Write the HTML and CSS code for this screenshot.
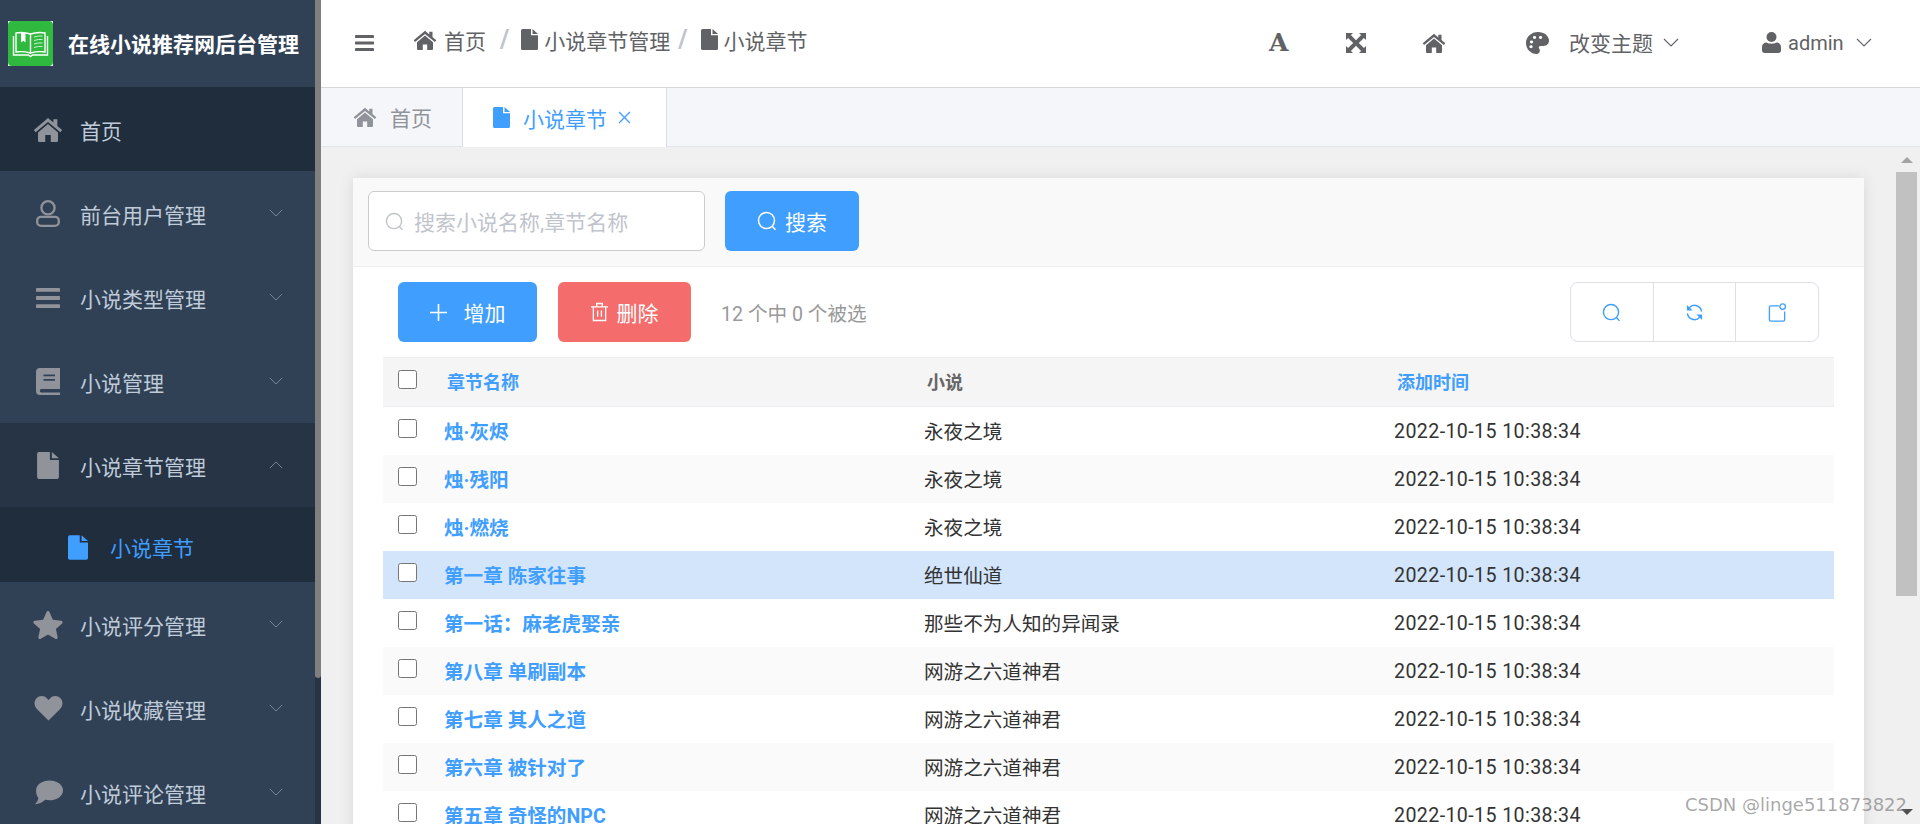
FILE: index.html
```html
<!DOCTYPE html>
<html lang="en">
<head>
    <meta charset="UTF-8">
    <meta name="viewport" content="width=device-width, initial-scale=1.0">
    <title>小说章节</title>
    <link rel="stylesheet" href="styles.css">
</head>
<body>
    <svg class="icon-defs" width="0" height="0">
        <symbol id="i-home" viewBox="0 0 24 20"><path d="M12 .8.7 10.3l1.4 1.8L12 3.9l9.9 8.2 1.4-1.8L19.500 7.100V1.800h-3.200v2.600z"/><path d="M12 5.600 4 12.300V19a1 1 0 0 0 1 1h4.800v-5.600h4.400V20H19a1 1 0 0 0 1-1v-6.700z"/></symbol>
        <symbol id="i-file" viewBox="0 0 17 21"><path d="M1.500 0H10v6.200h7v13.300a1.500 1.500 0 0 1-1.500 1.500h-14A1.500 1.500 0 0 1 0 19.500v-18A1.500 1.500 0 0 1 1.500 0zM11.500 0 17 4.900h-5.500z"/></symbol>
        <symbol id="i-bars" viewBox="0 0 24 20"><rect y="0" width="24" height="3.800" rx=".6"/><rect y="8.100" width="24" height="3.800" rx=".6"/><rect y="16.200" width="24" height="3.800" rx=".6"/></symbol>
        <symbol id="i-user-o" viewBox="0 0 24 27"><circle cx="12" cy="7.800" r="6.600" fill="none" stroke="currentColor" stroke-width="2.300"/><rect x="1.200" y="16.800" width="21.600" height="9" rx="3.800" fill="none" stroke="currentColor" stroke-width="2.300"/></symbol>
        <symbol id="i-book" viewBox="0 0 24 27"><path fill-rule="evenodd" d="M4 0H24V21H5a1.800 1.800 0 0 0 0 3.400H24V27H4a4 4 0 0 1-4-4V4a4 4 0 0 1 4-4zM7.500 6.500v1.800h11.500V6.500zM7.500 11v1.800h11.500V11z"/></symbol>
        <symbol id="i-star" viewBox="0 0 28 27"><path d="M14 0c.7 0 1.200.5 1.500 1.200l3.200 7.300 8 .8c1.400.2 1.900 1.800.9 2.700l-6 5.300 1.700 7.800c.3 1.400-1.200 2.400-2.400 1.700L14 22.700 7.100 26.800c-1.200.7-2.700-.3-2.400-1.700l1.700-7.800-6-5.300c-1-.9-.5-2.500.9-2.700l8-.8 3.200-7.300C12.800.5 13.300 0 14 0z"/></symbol>
        <symbol id="i-heart" viewBox="0 0 28 25"><path d="M14 24.500 2.600 13.300C-.8 10-.8 5.100 2.100 2.200 5-.7 9.700-.5 12.500 2.400L14 4l1.500-1.600c2.800-2.900 7.500-3.100 10.400-.2 2.900 2.900 2.900 7.800-.5 11.100z"/></symbol>
        <symbol id="i-comment" viewBox="0 0 28 23"><path d="M15 0c7.200 0 13 4.200 13 9.500S22.200 19 15 19c-1.500 0-2.900-.2-4.200-.5C8.800 20.600 5.200 22.700.8 22.900c1.800-1.400 3-3.600 3.400-6.100C2.800 15 2 12.400 2 9.500 2 4.200 7.800 0 15 0z"/></symbol>
        <symbol id="i-chev" viewBox="0 0 16 9"><path d="M1 1l7 7 7-7" fill="none" stroke="currentColor" stroke-width="1.100"/></symbol>
        <symbol id="i-search" viewBox="0 0 20 20"><circle cx="9.500" cy="9.500" r="8" fill="none" stroke="currentColor" stroke-width="1.500"/><path d="M15.200 15.200l3.300 3.600" fill="none" stroke="currentColor" stroke-width="1.500"/></symbol>
        <symbol id="i-refresh" viewBox="0 0 20 20"><path d="M17.500 9a7.500 7.500 0 0 0-13-4M2.500 11a7.500 7.500 0 0 0 13 4" fill="none" stroke="currentColor" stroke-width="1.500"/><path d="M2 2v6h6zM18 18v-6h-6z"/></symbol>
        <symbol id="i-notice" viewBox="0 0 20 20"><path d="M11.500 3H3a1.500 1.500 0 0 0-1.500 1.500v13A1.500 1.500 0 0 0 3 19h13a1.500 1.500 0 0 0 1.500-1.500V9" fill="none" stroke="currentColor" stroke-width="1.400"/><circle cx="15.500" cy="3.800" r="2.900" fill="none" stroke="currentColor" stroke-width="1.400"/></symbol>
        <symbol id="i-expand" viewBox="0 0 20 20"><path d="M0 0h7L4.900 2.100 10 7.200l5.100-5.100L13 0h7v7l-2.100-2.100L12.800 10l5.100 5.100L20 13v7h-7l2.100-2.100L10 12.800l-5.100 5.100L7 20H0v-7l2.100 2.100L7.200 10 2.100 4.900 0 7z"/></symbol>
        <symbol id="i-palette" viewBox="0 0 23 25" preserveAspectRatio="none"><path fill-rule="evenodd" d="M12 0c6.500 0 11 4.500 11 10 0 3.500-2.300 5.800-5.500 5.800h-3c-1.500 0-2.200 1.200-1.600 2.300.5.900 1 1.700 1 2.700 0 2.500-1.400 4.200-3.300 4.200C4.800 25 0 19.400 0 12.500S5.300 0 12 0zM5.500 9.600a1.700 1.700 0 1 0 0 3.400 1.700 1.700 0 0 0 0-3.400zM8.500 4.600a1.700 1.700 0 1 0 0 3.400 1.700 1.700 0 0 0 0-3.400zM14.500 4.600a1.700 1.700 0 1 0 0 3.400 1.700 1.700 0 0 0 0-3.400zM5 15a1.700 1.700 0 1 0 0 3.400A1.700 1.700 0 0 0 5 15z"/></symbol>
        <symbol id="i-user" viewBox="0 0 19 21"><circle cx="9.500" cy="5" r="5"/><path d="M0 18.500v-3.500c0-2.800 2.200-4.500 4.500-4.500 1.300.8 3 1.200 5 1.200s3.700-.4 5-1.200c2.300 0 4.500 1.700 4.500 4.500v3.500c0 1.400-1.100 2.500-2.500 2.500h-14C1.100 21 0 19.900 0 18.500z"/></symbol>
        <symbol id="i-trash" viewBox="0 0 18 20"><path d="M0 4.500h18M6 4.500V1h6v3.500M2.500 4.500V19h13V4.500M7 8.500v6.500M11 8.500v6.500" fill="none" stroke="currentColor" stroke-width="1.400"/></symbol>
        <symbol id="i-plus" viewBox="0 0 16 16"><path d="M8 0v16M0 8h16" fill="none" stroke="currentColor" stroke-width="1.500"/></symbol>
        <symbol id="i-close" viewBox="0 0 12 12"><path d="M1 1l10 10M11 1 1 11" fill="none" stroke="currentColor" stroke-width="1.200"/></symbol>
    </svg>

    <aside class="sidebar">
        <div class="sidebar-inner">
            <div class="brand">
                <svg class="brand-logo" viewBox="0 0 45 45">
                    <rect width="45" height="45" fill="#fff"/>
                    <rect width="45" height="45" rx="4" fill="#2fba3f"/>
                    <path d="M8 12q7-1.500 14.500 1v19Q15 30 8 31zM37 12q-7-1.500-14.500 1v19q7.500-2 14.500-1z" fill="none" stroke="#fff" stroke-width="1.400"/>
                    <path d="M5.500 15v19h15l2 1.500 2-1.500h15V15" fill="none" stroke="#fff" stroke-width="1.400"/>
                    <path d="M13 11.500h4.500v10l-2.200-1.800-2.300 1.800z" fill="#fff"/>
                    <path d="M26 16q4.500-1.500 8.500-1M26 19.500q4.500-1.500 8.500-1M26 23q4.500-1.500 8.500-1M26 26.500q4.500-1.500 8.500-1" fill="none" stroke="#c9efcd" stroke-width="1"/>
                </svg>
                <span class="brand-title">在线小说推荐网后台管理</span>
            </div>
            <nav class="menu">
                <div class="menu-item is-current"><svg class="menu-icon i-h"><use href="#i-home"/></svg><span>首页</span></div>
                <div class="menu-item"><svg class="menu-icon"><use href="#i-user-o"/></svg><span>前台用户管理</span><svg class="menu-arrow"><use href="#i-chev"/></svg></div>
                <div class="menu-item"><svg class="menu-icon i-b"><use href="#i-bars"/></svg><span>小说类型管理</span><svg class="menu-arrow"><use href="#i-chev"/></svg></div>
                <div class="menu-item"><svg class="menu-icon"><use href="#i-book"/></svg><span>小说管理</span><svg class="menu-arrow"><use href="#i-chev"/></svg></div>
                <div class="menu-item is-open"><svg class="menu-icon i-f"><use href="#i-file"/></svg><span>小说章节管理</span><svg class="menu-arrow is-up"><use href="#i-chev"/></svg></div>
                <div class="menu-sub"><svg class="sub-icon"><use href="#i-file"/></svg><span>小说章节</span></div>
                <div class="menu-item"><svg class="menu-icon i-s"><use href="#i-star"/></svg><span>小说评分管理</span><svg class="menu-arrow"><use href="#i-chev"/></svg></div>
                <div class="menu-item"><svg class="menu-icon i-hh"><use href="#i-heart"/></svg><span>小说收藏管理</span><svg class="menu-arrow"><use href="#i-chev"/></svg></div>
                <div class="menu-item"><svg class="menu-icon i-hh"><use href="#i-comment"/></svg><span>小说评论管理</span><svg class="menu-arrow"><use href="#i-chev"/></svg></div>
            </nav>
        </div>
        <div class="sidebar-scroll"><div class="sidebar-thumb"></div></div>
    </aside>

    <div class="main">
        <header class="topbar">
            <svg class="burger"><use href="#i-bars"/></svg>
            <div class="crumbs">
                <svg class="crumb-home"><use href="#i-home"/></svg><span class="crumb-first">首页</span>
                <span class="crumb-sep">/</span>
                <svg class="crumb-file"><use href="#i-file"/></svg><span>小说章节管理</span>
                <span class="crumb-sep crumb-sep-2">/</span>
                <svg class="crumb-file"><use href="#i-file"/></svg><span>小说章节</span>
            </div>
            <div class="top-tools">
                <span class="tool-font">A</span>
                <svg class="tool-expand"><use href="#i-expand"/></svg>
                <svg class="tool-home"><use href="#i-home"/></svg>
                <svg class="tool-palette"><use href="#i-palette"/></svg>
                <span class="tool-theme">改变主题</span>
                <svg class="tool-chev"><use href="#i-chev"/></svg>
                <svg class="tool-user"><use href="#i-user"/></svg>
                <span class="tool-name">admin</span>
                <svg class="tool-chev"><use href="#i-chev"/></svg>
            </div>
        </header>

        <div class="tabs">
            <div class="tab"><svg class="tab-home"><use href="#i-home"/></svg><span>首页</span></div>
            <div class="tab is-active"><svg class="tab-file"><use href="#i-file"/></svg><span>小说章节</span><svg class="tab-close"><use href="#i-close"/></svg></div>
        </div>

        <div class="content">
            <div class="content-scroll">
                <div class="card">
                    <div class="search-bar">
                        <div class="search-input"><svg class="search-icon"><use href="#i-search"/></svg><span>搜索小说名称,章节名称</span></div>
                        <div class="btn btn-primary btn-search"><svg class="btn-icon"><use href="#i-search"/></svg><span>搜索</span></div>
                    </div>
                    <div class="card-body">
                        <div class="toolbar">
                            <div class="btn btn-primary btn-add"><svg class="btn-icon-plus"><use href="#i-plus"/></svg><span>增加</span></div>
                            <div class="btn btn-danger btn-del"><svg class="btn-icon-trash"><use href="#i-trash"/></svg><span>删除</span></div>
                            <span class="selected-info">12 个中 0 个被选</span>
                            <div class="tool-group">
                                <div class="tool-cell"><svg><use href="#i-search"/></svg></div>
                                <div class="tool-cell"><svg><use href="#i-refresh"/></svg></div>
                                <div class="tool-cell"><svg><use href="#i-notice"/></svg></div>
                            </div>
                        </div>
                        <table class="data-table">
                            <colgroup><col class="col-check"><col class="col-name"><col class="col-novel"><col></colgroup>
                            <thead>
                                <tr>
                                    <th class="cell-check"><input type="checkbox"></th>
                                    <th class="is-link">章节名称</th>
                                    <th>小说</th>
                                    <th class="is-link">添加时间</th>
                                </tr>
                            </thead>
                            <tbody>
                                <tr><td class="cell-check"><input type="checkbox"></td><td class="is-link">烛·灰烬</td><td>永夜之境</td><td class="cell-time">2022-10-15 10:38:34</td></tr>
                                <tr><td class="cell-check"><input type="checkbox"></td><td class="is-link">烛·残阳</td><td>永夜之境</td><td class="cell-time">2022-10-15 10:38:34</td></tr>
                                <tr><td class="cell-check"><input type="checkbox"></td><td class="is-link">烛·燃烧</td><td>永夜之境</td><td class="cell-time">2022-10-15 10:38:34</td></tr>
                                <tr class="is-hover"><td class="cell-check"><input type="checkbox"></td><td class="is-link">第一章 陈家往事</td><td>绝世仙道</td><td class="cell-time">2022-10-15 10:38:34</td></tr>
                                <tr><td class="cell-check"><input type="checkbox"></td><td class="is-link">第一话：麻老虎娶亲</td><td>那些不为人知的异闻录</td><td class="cell-time">2022-10-15 10:38:34</td></tr>
                                <tr><td class="cell-check"><input type="checkbox"></td><td class="is-link">第八章 单刷副本</td><td>网游之六道神君</td><td class="cell-time">2022-10-15 10:38:34</td></tr>
                                <tr><td class="cell-check"><input type="checkbox"></td><td class="is-link">第七章 其人之道</td><td>网游之六道神君</td><td class="cell-time">2022-10-15 10:38:34</td></tr>
                                <tr><td class="cell-check"><input type="checkbox"></td><td class="is-link">第六章 被针对了</td><td>网游之六道神君</td><td class="cell-time">2022-10-15 10:38:34</td></tr>
                                <tr><td class="cell-check"><input type="checkbox"></td><td class="is-link">第五章 奇怪的NPC</td><td>网游之六道神君</td><td class="cell-time">2022-10-15 10:38:34</td></tr>
                            </tbody>
                        </table>
                    </div>
                </div>
            </div>
            <div class="page-scroll">
                <div class="scroll-arrow"><i class="arrow-up"></i></div>
                <div class="scroll-thumb"></div>
                <div class="scroll-rest"></div>
                <i class="arrow-down"></i>
            </div>
        </div>
    </div>

    <div class="watermark">CSDN @linge511873822</div>
</body>
</html>
```

FILE: styles.css
```css
* {
    margin: 0;
    padding: 0;
    box-sizing: border-box;
}

body {
    display: flex;
    height: 100vh;
    overflow: hidden;
    background: #fff;
    color: #333;
    font-family: Roboto, "Noto Sans CJK SC", sans-serif;
    font-size: 21px;
}

svg {
    display: block;
    flex: none;
    fill: currentColor;
}

.icon-defs {
    position: absolute;
}

/* sidebar */
.sidebar {
    display: flex;
    flex: none;
    width: 321px;
    height: 100%;
    background: #304156;
}

.sidebar-inner {
    width: 315px;
    overflow: hidden;
}

.sidebar-scroll {
    width: 6px;
    background: #263445;
}

.sidebar-thumb {
    height: 678px;
    background: #7f7f7f;
    border-radius: 0 0 3px 3px;
}

.brand {
    display: flex;
    align-items: center;
    height: 87px;
    padding-left: 8px;
}

.brand-logo {
    width: 45px;
    height: 45px;
}

.brand-title {
    margin-left: 15px;
    margin-top: -2px;
    font-size: 21px;
    font-weight: 700;
    color: #fff;
    white-space: nowrap;
}

.menu-item {
    display: flex;
    align-items: center;
    height: 84px;
    padding-left: 36px;
    padding-top: 1px;
    color: #bfcbd9;
}

.menu-item.is-current {
    background: #1f2d3d;
}

.menu-item.is-open {
    background: #263445;
}

.menu-icon {
    width: 24px;
    height: 27px;
    margin-right: 20px;
    color: #909399;
}

.menu-icon.i-h {
    width: 30px;
    height: 25px;
    margin-left: -3px;
    margin-right: 17px;
}

.menu-icon.i-b {
    height: 20px;
}

.menu-icon.i-f {
    height: 27px;
}

.menu-icon.i-s {
    width: 30px;
    height: 28px;
    margin-left: -3px;
    margin-right: 17px;
}

.menu-icon.i-hh {
    width: 29px;
    height: 25px;
    margin-left: -2px;
    margin-right: 17px;
}

.menu-arrow {
    width: 14px;
    height: 8px;
    margin-left: auto;
    margin-right: 32px;
    margin-top: -1px;
    color: #7d8895;
}

.menu-arrow.is-up {
    transform: rotate(180deg);
}

.menu-sub {
    display: flex;
    align-items: center;
    height: 75px;
    padding-left: 68px;
    padding-top: 5px;
    background: #1f2d3d;
    color: #409eff;
}

.sub-icon {
    width: 20px;
    height: 27px;
    margin-right: 22px;
}

/* main column */
.main {
    display: flex;
    flex: 1;
    flex-direction: column;
    min-width: 0;
}

.topbar {
    display: flex;
    flex: none;
    align-items: center;
    height: 88px;
    padding-left: 34px;
    border-bottom: 1px solid #d8d8d8;
    color: #606266;
}

.burger {
    width: 19px;
    height: 16px;
    margin-top: -1px;
}

.crumbs {
    display: flex;
    align-items: center;
    margin-left: 39px;
    margin-top: -8px;
    white-space: nowrap;
}

.crumb-home {
    width: 24px;
    height: 20px;
    margin-right: 7px;
}

.crumb-file {
    width: 17px;
    height: 21px;
    margin-right: 6px;
}

.crumb-sep {
    margin: 0 12px 0 14px;
    font-size: 25px;
    line-height: 30px;
    font-weight: 700;
    color: #c0c4cc;
}

.crumb-sep-2 {
    margin: 0 13px 0 8px;
}

.top-tools {
    display: flex;
    align-items: center;
    margin-left: auto;
    margin-top: -2px;
    padding-right: 48px;
    white-space: nowrap;
}

.tool-font {
    width: 19px;
    margin-right: 58px;
    font-family: "DejaVu Serif", serif;
    font-size: 25px;
    font-weight: 700;
    line-height: 24px;
    text-align: center;
}

.tool-expand {
    width: 20px;
    height: 20px;
    margin-right: 56px;
}

.tool-home {
    width: 24px;
    height: 20px;
    margin-right: 80px;
}

.tool-palette {
    width: 23px;
    height: 22px;
    margin-right: 20px;
}

.tool-theme {
    margin-right: 10px;
    margin-top: -2px;
}

.tool-chev {
    width: 16px;
    height: 9px;
}

.tool-user {
    width: 19px;
    height: 21px;
    margin-left: 83px;
    margin-right: 7px;
}

.tool-name {
    width: 56px;
    margin-right: 12px;
    font-size: 20px;
}

/* tabs */
.tabs {
    display: flex;
    flex: none;
    height: 59px;
    background: #f5f6fa;
    border-bottom: 1px solid #e3e5ee;
    color: #909399;
}

.tab {
    display: flex;
    align-items: center;
    width: 142px;
    padding-left: 32px;
    border-right: 1px solid #d8dce5;
}

.tab.is-active {
    width: 204px;
    height: 59px;
    padding-left: 30px;
    background: #fff;
    border-right: 1px solid #d8dce5;
    color: #409eff;
}

.tab-home {
    width: 24px;
    height: 20px;
    margin-right: 13px;
}

.tab-file {
    width: 17px;
    height: 21px;
    margin-right: 13px;
}

.tab-close {
    width: 13px;
    height: 13px;
    margin-left: 11px;
}

/* content */
.content {
    display: flex;
    flex: 1;
    min-height: 0;
    background: #f0f0f0;
}

.content-scroll {
    flex: 1;
    min-width: 0;
    padding: 31px 32px 0;
    overflow: hidden;
}

.card {
    background: #fff;
    box-shadow: 0 0 14px rgba(0, 0, 0, 0.1);
}

.search-bar {
    display: flex;
    gap: 20px;
    height: 89px;
    padding: 13px 0 0 15px;
    background: #f9f9f9;
    border-bottom: 1px solid #eee;
}

.search-input {
    display: flex;
    align-items: center;
    width: 337px;
    height: 60px;
    padding-left: 16px;
    background: #fff;
    border: 1px solid #ccc;
    border-radius: 6px;
    color: #c0c4cc;
}

.search-icon {
    width: 19px;
    height: 19px;
    margin-right: 10px;
}

.btn {
    display: flex;
    align-items: center;
    justify-content: center;
    height: 60px;
    border-radius: 6px;
    color: #fff;
}

.btn-primary {
    background: #409eff;
}

.btn-danger {
    background: #f56c6c;
}

.btn-search {
    width: 134px;
}

.btn-icon {
    width: 20px;
    height: 20px;
    margin-right: 8px;
}

.btn-add {
    width: 139px;
}

.btn-del {
    width: 133px;
    margin-left: 21px;
}

.btn-icon-plus {
    width: 17px;
    height: 17px;
    margin-right: 17px;
}

.btn-icon-trash {
    width: 17px;
    height: 20px;
    margin-right: 9px;
}

.card-body {
    padding: 15px 30px 0;
}

.toolbar {
    display: flex;
    align-items: center;
    padding: 0 15px;
    margin-bottom: 15px;
}

.selected-info {
    margin-left: 30px;
    font-size: 19.6px;
    color: #999;
}

.tool-group {
    display: flex;
    width: 249px;
    height: 60px;
    margin-left: auto;
    background: #fff;
    border: 1px solid #dcdfe6;
    border-radius: 8px;
    color: #409eff;
}

.tool-cell {
    display: flex;
    flex: 1;
    align-items: center;
    justify-content: center;
    border-right: 1px solid #dcdfe6;
}

.tool-cell:last-child {
    border-right: none;
}

.tool-cell svg {
    width: 19px;
    height: 19px;
}

/* table */
.data-table {
    width: 100%;
    border-collapse: collapse;
    table-layout: fixed;
}

.col-check {
    width: 49px;
}

.col-name {
    width: 480px;
}

.col-novel {
    width: 470px;
}

.data-table th {
    height: 49px;
    padding-left: 15px;
    padding-bottom: 2px;
    background: #f5f5f5;
    border-top: 1px solid #eee;
    border-bottom: 1px solid #ebeef5;
    font-size: 18px;
    font-weight: 700;
    text-align: left;
    color: #666;
}

.data-table td {
    height: 48px;
    padding-left: 12px;
    font-size: 19.6px;
    color: #333;
    white-space: nowrap;
}

.data-table .cell-time {
    padding-top: 2px;
    letter-spacing: 0.4px;
}

.data-table tbody tr:nth-child(even) td {
    background: #fafafa;
}

.data-table tbody tr.is-hover td {
    background: #d2e5fb;
}

.data-table .cell-check {
    padding: 12px 0 0 15px;
    vertical-align: top;
}

.data-table input {
    display: block;
    width: 19px;
    height: 19px;
}

.data-table .is-link {
    font-weight: 700;
    color: #409eff;
}

/* page scrollbar */
.page-scroll {
    display: flex;
    flex: none;
    flex-direction: column;
    align-items: center;
    width: 24px;
    padding-right: 3px;
    background: #f0f0f0;
}

.scroll-arrow {
    display: flex;
    flex: none;
    align-items: flex-start;
    height: 25px;
    padding-top: 10px;
}

.arrow-up {
    border: 6px solid transparent;
    border-top: none;
    border-bottom: 6px solid #a3a3a3;
}

.scroll-thumb {
    flex: none;
    width: 21px;
    height: 424px;
    background: #c1c1c1;
}

.scroll-rest {
    flex: 1;
}

.arrow-down {
    margin-bottom: 9px;
    border: 6px solid transparent;
    border-bottom: none;
    border-top: 6px solid #505050;
}

.watermark {
    position: absolute;
    right: 13px;
    bottom: 9px;
    font-family: "DejaVu Sans", sans-serif;
    font-size: 18px;
    color: rgba(110, 110, 110, 0.6);
    white-space: nowrap;
}
```
